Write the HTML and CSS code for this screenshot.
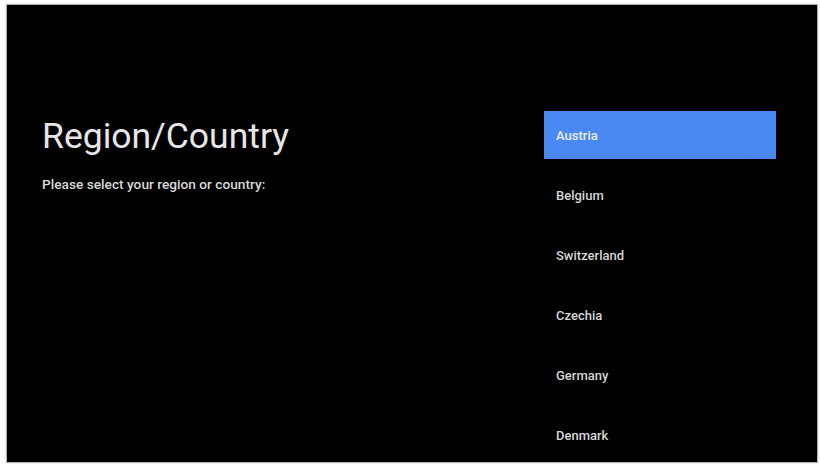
FILE: index.html
```html
<!DOCTYPE html>
<html>
<head>
<meta charset="utf-8">
<link rel="stylesheet" href="styles.css">
</head>
<body>
<div class="screen">
  <div class="intro">
    <h1 class="title">Region/Country</h1>
    <p class="subtitle">Please select your region or country:</p>
  </div>
  <ul class="list">
    <li class="item selected">Austria</li>
    <li class="item">Belgium</li>
    <li class="item">Switzerland</li>
    <li class="item">Czechia</li>
    <li class="item">Germany</li>
    <li class="item">Denmark</li>
  </ul>
</div>
</body>
</html>
```
FILE: styles.css
```css
html, body {
  margin: 0;
  padding: 0;
  background: #ffffff;
}
body {
  font-family: Roboto, "Liberation Sans", sans-serif;
  padding: 5px 3px 3px 7px;
  height: 465px;
  box-sizing: border-box;
}
.screen {
  background: #000;
  height: 457px;
  display: flex;
  overflow: hidden;
  box-shadow: 0 0 1px 1px rgba(0,0,0,0.3);
}
.intro {
  padding: 111px 0 0 35px;
  width: 502px;
  flex: none;
}
.title {
  margin: 0;
  font-size: 35.5px;
  font-weight: 400;
  line-height: 40px;
  color: #e6e6e6;
}
.subtitle {
  margin: 20px 0 0;
  font-size: 13.7px;
  font-weight: 500;
  color: #d8d8d8;
}
.list {
  list-style: none;
  margin: 0;
  padding: 106px 0 0;
  width: 232px;
  display: flex;
  flex-direction: column;
  gap: 12px;
}
.item {
  height: 48px;
  display: flex;
  align-items: center;
  padding-left: 12px;
  font-size: 13px;
  font-weight: 500;
  color: #d6d6d6;
  flex: none;
}
.item.selected {
  background: #4a88f2;
  color: #e8eefc;
}
```
